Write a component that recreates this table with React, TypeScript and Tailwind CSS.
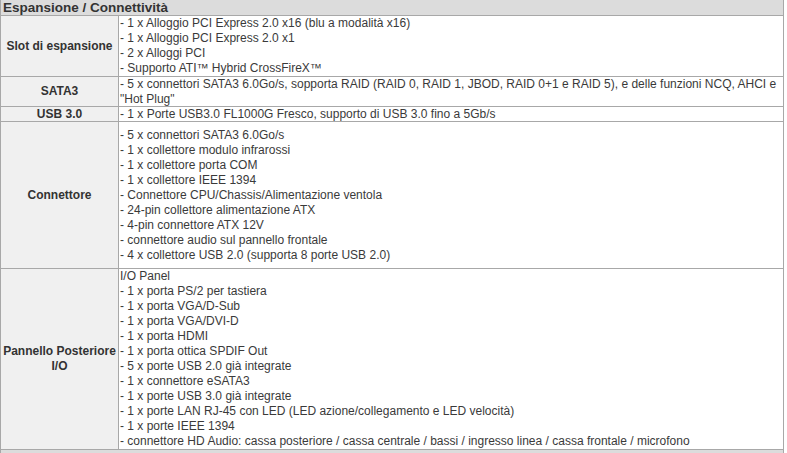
const rows: { label: string; height: string; lines: string[] }[] = [
  {
    label: 'Slot di espansione',
    height: 'h-[60px]',
    lines: [
      '- 1 x Alloggio PCI Express 2.0 x16 (blu a modalità x16)',
      '- 1 x Alloggio PCI Express 2.0 x1',
      '- 2 x Alloggi PCI',
      '- Supporto ATI™ Hybrid CrossFireX™',
    ],
  },
  {
    label: 'SATA3',
    height: 'h-[29px]',
    lines: [
      '- 5 x connettori SATA3 6.0Go/s, sopporta RAID (RAID 0, RAID 1, JBOD, RAID 0+1 e RAID 5), e delle funzioni NCQ, AHCI e "Hot Plug"',
    ],
  },
  {
    label: 'USB 3.0',
    height: 'h-[14px]',
    lines: ['- 1 x Porte USB3.0 FL1000G Fresco, supporto di USB 3.0 fino a 5Gb/s'],
  },
  {
    label: 'Connettore',
    height: 'h-[146px]',
    lines: [
      '- 5 x connettori SATA3 6.0Go/s',
      '- 1 x collettore modulo infrarossi',
      '- 1 x collettore porta COM',
      '- 1 x collettore IEEE 1394',
      '- Connettore CPU/Chassis/Alimentazione ventola',
      '- 24-pin collettore alimentazione ATX',
      '- 4-pin connettore ATX 12V',
      '- connettore audio sul pannello frontale',
      '- 4 x collettore USB 2.0 (supporta 8 porte USB 2.0)',
    ],
  },
  {
    label: 'Pannello Posteriore I/O',
    height: 'h-[180px]',
    lines: [
      'I/O Panel',
      '- 1 x porta PS/2 per tastiera',
      '- 1 x porta VGA/D-Sub',
      '- 1 x porta VGA/DVI-D',
      '- 1 x porta HDMI',
      '- 1 x porta ottica SPDIF Out',
      '- 5 x porte USB 2.0 già integrate',
      '- 1 x connettore eSATA3',
      '- 1 x porte USB 3.0 già integrate',
      '- 1 x porte LAN RJ-45 con LED (LED azione/collegamento e LED velocità)',
      '- 1 x porte IEEE 1394',
      '- connettore HD Audio: cassa posteriore / cassa centrale / bassi / ingresso linea / cassa frontale / microfono',
    ],
  },
];

export default function App() {
  return (
    <div className="w-[787px] h-[453px] overflow-hidden bg-white font-['Liberation_Sans',Arial,sans-serif] text-[12px] leading-[15px] text-[#3a3a3a]">
      <div className="w-[784px] border-x border-[#a8a8a8]">
        {/* Section header */}
        <div className="h-[16px] bg-[#dcdcdc] border-b border-[#a8a8a8] px-[2px] font-bold text-[13.5px] text-[#333] leading-[15px]">
          Espansione / Connettività
        </div>

        {rows.map((row) => (
          <div key={row.label} className="flex border-b border-[#a8a8a8]">
            <div
              className={`w-[118px] shrink-0 ${row.height} bg-[#f0f0f0] border-r border-[#a8a8a8] flex items-center justify-center text-center font-bold text-[#333] px-[2px]`}
            >
              {row.label}
            </div>
            <div className={`flex-1 ${row.height} bg-white flex flex-col justify-center pl-[1px] pr-[4px]`}>
              {row.lines.map((line) => (
                <div key={line}>{line}</div>
              ))}
            </div>
          </div>
        ))}

        <div className="h-[8px] bg-[#dcdcdc]" />
      </div>
    </div>
  );
}
